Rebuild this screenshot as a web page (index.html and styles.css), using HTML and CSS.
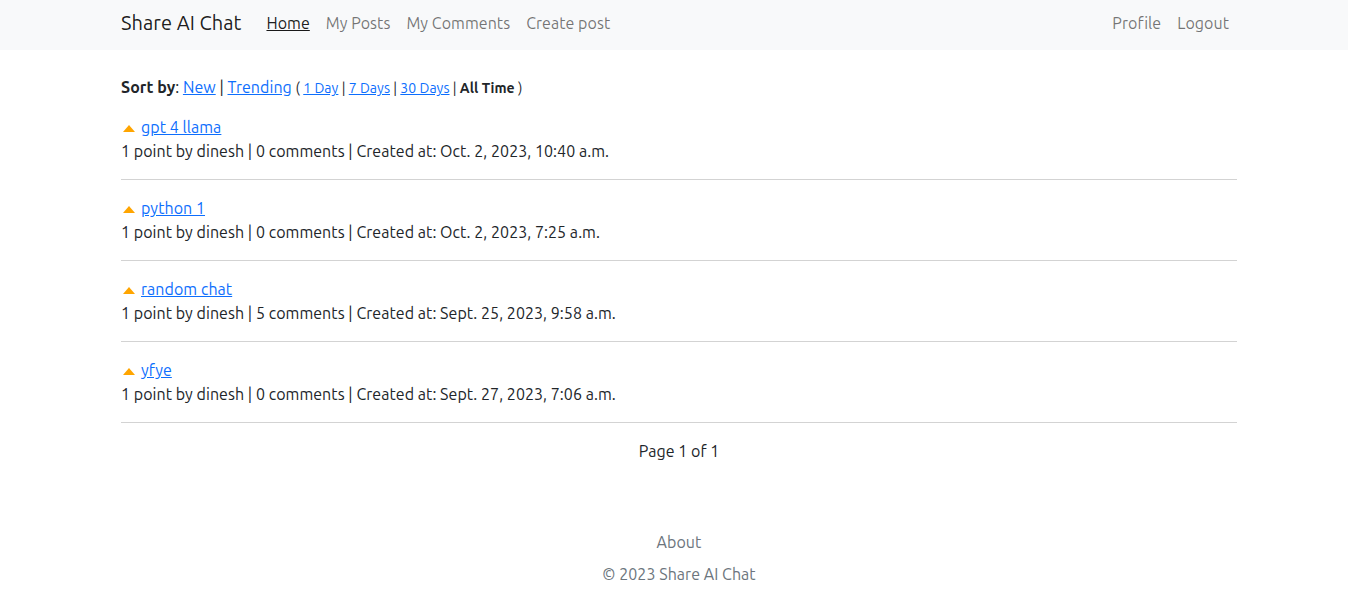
FILE: index.html
```html
<!DOCTYPE html>
<html lang="en">
<head>
<meta charset="utf-8">
<title>Share AI Chat</title>
<link rel="stylesheet" href="styles.css">
</head>
<body>
<nav class="navbar">
  <div class="wrap nav-inner">
    <a class="brand" href="#">Share AI Chat</a>
    <ul class="nav-links">
      <li><a class="active" href="#">Home</a></li>
      <li><a href="#">My Posts</a></li>
      <li><a href="#">My Comments</a></li>
      <li><a href="#">Create post</a></li>
    </ul>
    <ul class="nav-links nav-right">
      <li><a href="#">Profile</a></li>
      <li><a href="#">Logout</a></li>
    </ul>
  </div>
</nav>
<main class="wrap main">
  <p class="sort"><b>Sort by</b>: <a href="#">New</a> | <a href="#">Trending</a> <span class="small">( <a href="#">1 Day</a> | <a href="#">7 Days</a> | <a href="#">30 Days</a> | <b>All Time</b> )</span></p>

  <div class="post">
    <div class="title"><span class="arrow"></span><a href="#">gpt 4 llama</a></div>
    <div class="meta">1 point by dinesh | 0 comments | Created at: Oct. 2, 2023, 10:40 a.m.</div>
  </div>
  <hr>
  <div class="post">
    <div class="title"><span class="arrow"></span><a href="#">python 1</a></div>
    <div class="meta">1 point by dinesh | 0 comments | Created at: Oct. 2, 2023, 7:25 a.m.</div>
  </div>
  <hr>
  <div class="post">
    <div class="title"><span class="arrow"></span><a href="#">random chat</a></div>
    <div class="meta">1 point by dinesh | 5 comments | Created at: Sept. 25, 2023, 9:58 a.m.</div>
  </div>
  <hr>
  <div class="post">
    <div class="title"><span class="arrow"></span><a href="#">yfye</a></div>
    <div class="meta">1 point by dinesh | 0 comments | Created at: Sept. 27, 2023, 7:06 a.m.</div>
  </div>
  <hr>
  <div class="pager">Page 1 of 1</div>
</main>
<footer class="footer">
  <a class="about" href="#">About</a>
  <p class="copy">© 2023 Share AI Chat</p>
</footer>
</body>
</html>
```
FILE: styles.css
```css
* { box-sizing: border-box; }
body {
  margin: 0;
  font-family: Ubuntu, "Open Sans", "Noto Sans", sans-serif;
  font-size: 16px;
  line-height: 24px;
  letter-spacing: 0.045px;
  color: #212529;
  background: #fff;
}
a { color: #0d6efd; }
.wrap {
  width: 1116px;
  margin: 0 auto;
  position: relative;
  left: 5px;
}
.navbar {
  background: #f8f9fa;
  height: 50px;
}
.nav-inner {
  display: flex;
  align-items: center;
  height: 46px;
}
.brand {
  font-size: 20px;
  line-height: 30px;
  color: rgba(0,0,0,.9);
  text-decoration: none;
  margin-right: 17px;
}
.nav-links {
  display: flex;
  list-style: none;
  margin: 0;
  padding: 0;
}
.nav-links a {
  display: block;
  padding: 8px;
  color: rgba(0,0,0,.55);
  text-decoration: none;
}
.nav-links a.active {
  color: rgba(0,0,0,.9);
  text-decoration: underline;
}
.nav-right { margin-left: auto; }
.main { padding-top: 25px; }
.sort { margin: 0 0 15px; }
.small { font-size: 14px; }
.post .title { display: flex; align-items: center; }
.arrow {
  width: 0; height: 0;
  border-left: 6px solid transparent;
  border-right: 6px solid transparent;
  border-bottom: 7px solid #ffa500;
  margin: 2px 6px 0 2px;
}
hr {
  margin: 16px 0;
  border: 0;
  border-top: 1px solid #d3d3d3;
}
.pager { text-align: center; }
.footer {
  text-align: center;
  margin-top: 67px;
  position: relative;
  left: 5px;
}
.about {
  display: block;
  color: #6c757d;
  text-decoration: none;
}
.copy {
  margin: 8px 0 0;
  color: #6c757d;
}
```
